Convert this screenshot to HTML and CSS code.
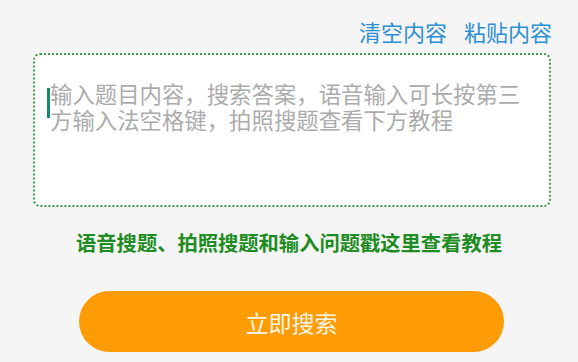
FILE: index.html
```html
<!DOCTYPE html>
<html lang="zh">
<head>
<meta charset="utf-8">
<link rel="stylesheet" href="styles.css">
</head>
<body>
<div class="page">
  <div class="actions">
    <span class="link">清空内容</span>
    <span class="link">粘贴内容</span>
  </div>
  <div class="inputbox">
    <span class="caret"></span>
    <p class="placeholder">输入题目内容，搜索答案，语音输入可长按第三方输入法空格键，拍照搜题查看下方教程</p>
  </div>
  <p class="tip">语音搜题、拍照搜题和输入问题戳这里查看教程</p>
  <div class="btn">立即搜索</div>
</div>
</body>
</html>
```
FILE: styles.css
```css
html, body {
  margin: 0;
  padding: 0;
  background: #f5f5f5;
  font-family: "Noto Sans CJK SC", "Noto Sans", sans-serif;
}
.page {
  width: 578px;
  height: 362px;
  overflow: hidden;
  display: flex;
  flex-direction: column;
}
.actions {
  display: flex;
  justify-content: flex-end;
  gap: 17px;
  padding: 19px 26px 0 0;
  height: 34px;
}
.link {
  font-size: 22px;
  line-height: 24px;
  color: #2b8fd4;
}
.inputbox {
  position: relative;
  margin-left: 33px;
  width: 514px;
  height: 150px;
  border: 2px dotted #3f9a48;
  border-radius: 7px;
  background: #fff;
  box-sizing: content-box;
}
.caret {
  position: absolute;
  left: 12px;
  top: 33px;
  width: 3px;
  height: 30px;
  background: #17896b;
}
.placeholder {
  margin: 0;
  padding: 25px 14px 0 15px;
  font-size: 22.4px;
  line-height: 26px;
  color: #ababab;
}
.tip {
  margin: 23px 0 0;
  text-align: center;
  font-size: 20.3px;
  line-height: 24px;
  font-weight: bold;
  color: #1d8c22;
}
.btn {
  margin: 37px 0 0 79px;
  width: 425px;
  height: 61px;
  border-radius: 31px;
  background: #ff9b05;
  color: #fff5e6;
  font-size: 23px;
  display: flex;
  align-items: center;
  justify-content: center;
}
```
